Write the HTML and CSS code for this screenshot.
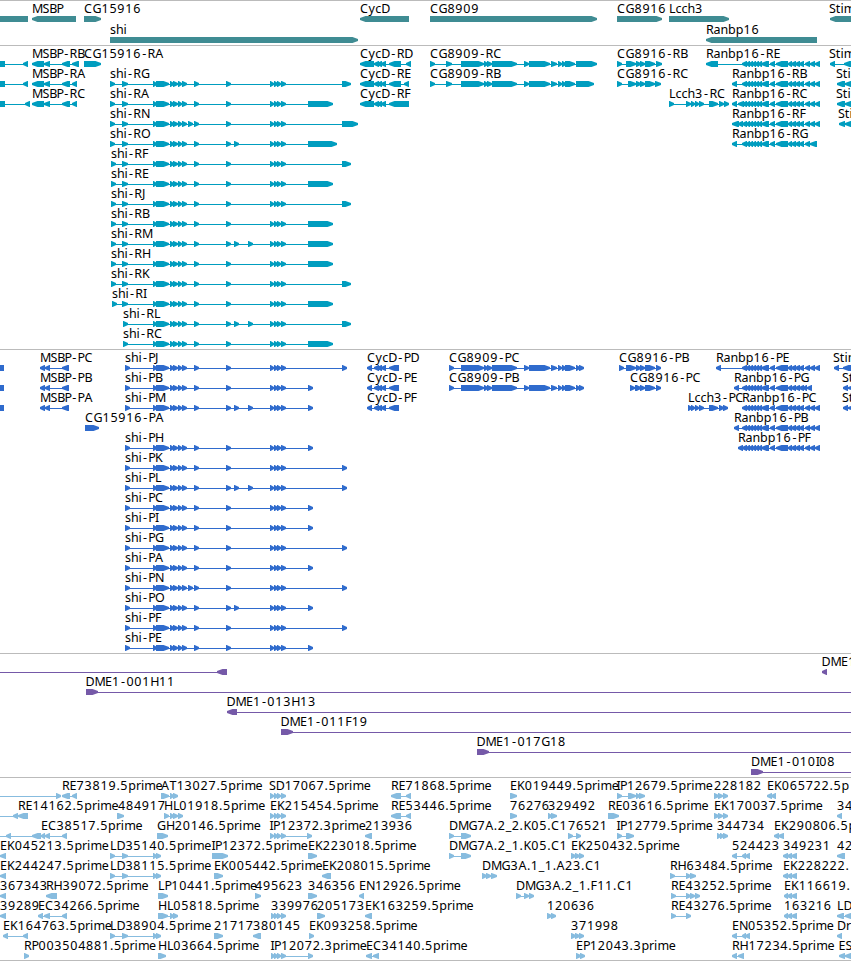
FILE: index.html
```html
<!DOCTYPE html>
<html lang="en">
<head>
<meta charset="utf-8">
<title>Genome browser</title>
<link rel="stylesheet" href="styles.css">
</head>
<body>
<main class="browser">
  <section class="track genes"><svg class="lane" id="genes" width="851" height="44"></svg></section>
  <section class="track transcripts"><svg class="lane" id="transcripts" width="851" height="303"></svg></section>
  <section class="track coding"><svg class="lane" id="coding" width="851" height="303"></svg></section>
  <section class="track clones"><svg class="lane" id="clones" width="851" height="123"></svg></section>
  <section class="track ests"><svg class="lane" id="ests" width="851" height="182"></svg></section>
</main>
<script src="tracks.js"></script>
</body>
</html>
```
FILE: styles.css
```css
body {
  margin: 0;
  background: #fff;
}

.browser {
  display: flex;
  flex-direction: column;
  width: 851px;
  height: 961px;
  overflow: hidden;
}

.track {
  border-top: 1px solid #bbb;
}

.ests {
  border-bottom: 1px solid #bbb;
}

.lane {
  display: block;
  overflow: hidden;
  font-family: "Noto Sans", "Open Sans", sans-serif;
  font-size: 12.5px;
}

.lane text {
  fill: #000;
}

.genes path { fill: #3f8c93; }
.transcripts path { fill: #009dbf; }
.coding path { fill: #2f6bcd; }
.clones path { fill: #7559a8; }
.ests path { fill: #87bcdf; }
```
FILE: tracks.js
```js
// Advance width of each character in a label, in pixels.
const ADVANCE = {
  A: 8.5, B: 7.1, C: 8.5, D: 9, E: 7, F: 6.6, G: 8.9, H: 8.9, I: 3.6, J: 3.8,
  K: 7.8, L: 6.4, M: 10.5, N: 8.9, O: 9.1, P: 6.8, R: 7.6, S: 6.8, T: 7.2,
  a: 7, b: 7.7, c: 6.1, e: 7, h: 7.5, i: 3.4, m: 11.2, n: 7.5, p: 7.7, r: 5,
  s: 6, t: 4.6, y: 6.7, "-": 6.4, ".": 3.9, "_": 6
};
const DIGIT_ADVANCE = 7.95;

// Feature: [row, label, label x, strand, segments, optional line start, optional line end]
const genes = [
  [0, "", 0, "<", "-10-28"],
  [0, "MSBP", 32, "<", "32-76"],
  [0, "CG15916", 84, ">", "84-101"],
  [0, "CycD", 360, "<", "360-409"],
  [0, "CG8909", 430, ">", "430-597"],
  [0, "CG8916", 617, ">", "617-662"],
  [0, "Lcch3", 669, ">", "669-729"],
  [0, "Stim", 829, "<", "830-870"],
  [1, "shi", 110, ">", "110-358"],
  [1, "Ranbp16", 706, "<", "706-817"]
];

const RAN_MID = "742-747 746-750 749-753 752-756 755-759 758-762 761-769 770-775 776-788 788-792 791-796 795-800 799-804 ";
const RAN = RAN_MID + "805-810 810-815 815-820";
const CG89 = "461-484 484-488 487-492 492-517 524-529 529-550 551-557 558-562 562-566 ";
const CG16 = "636-641 640-645 645-655 ";
const CYC = "374-379 377-382 381-386 ";

const shi = (row, label, x, start, extra, end) =>
  [row, label, x, ">", `${start} 153-157 156-169 170-174 173-178 178-182 182-187 194-199 226-231 270-274 274-278 277-281 281-286 ${extra} ${end}`];

const A = "342-351", B = "308-333", X1 = "188-193", X2 = "234-239", X3 = "234-239 248-253";
const S0 = "110-115 122-128", S1 = "111-116 122-128", S2 = "112-117 122-128", S3 = "123-128";

const transcripts = [
  [0, "", 0, "<", "-9-5 23-28"],
  [1, "", 0, "<", "-9-5 23-28"],
  [2, "", 0, "<", "-9-5 25-30"],
  [0, "MSBP-RB", 32, "<", "32-44 44-50 62-70 72-79"],
  [1, "MSBP-RA", 32, "<", "32-44 44-50 62-70 72-77"],
  [2, "MSBP-RC", 32, "<", "32-44 44-50 62-70 72-77"],
  [0, "CG15916-RA", 84, ">", "84-101"],
  shi(1, "shi-RG", 110, S0, "", A),
  shi(2, "shi-RA", 110, S0, "", B),
  shi(3, "shi-RN", 110, S0, X1, "342-358"),
  shi(4, "shi-RO", 110, S0, X2, "308-337"),
  shi(5, "shi-RF", 111, S1, "", A),
  shi(6, "shi-RE", 111, S1, "", B),
  shi(7, "shi-RJ", 111, S1, "", A),
  shi(8, "shi-RB", 111, S1, "", B),
  shi(9, "shi-RM", 111, S1, X3, B),
  shi(10, "shi-RH", 111, S1, "", B),
  shi(11, "shi-RK", 111, S1, "", A),
  shi(12, "shi-RI", 112, S2, "", B),
  shi(13, "shi-RL", 123, S3, X3, A),
  shi(14, "shi-RC", 123, S3, "", B),
  [0, "CycD-RD", 360, "<", `360-374 ${CYC} 389-401 406-411`],
  [1, "CycD-RE", 360, "<", `360-374 ${CYC} 389-401 404-409`],
  [2, "CycD-RF", 360, "<", `360-374 ${CYC} 389-409`],
  [0, "CG8909-RC", 430, ">", `430-435 446-452 ${CG89} 565-575 576-597`],
  [1, "CG8909-RB", 430, ">", `430-435 446-452 ${CG89} 565-575 576-594`],
  [0, "CG8916-RB", 617, ">", `617-622 626-636 ${CG16} 656-662`],
  [1, "CG8916-RC", 617, ">", `617-622 628-636 ${CG16} 655-661`],
  [2, "Lcch3-RC", 669, ">", "669-674 686-691 691-695 695-699 699-704 709-718 719-724 724-729"],
  [0, "Ranbp16-RE", 706, "<", `706-718 ${RAN}`],
  [1, "Ranbp16-RB", 732, "<", `732-737 ${RAN}`],
  [2, "Ranbp16-RC", 732, "<", `732-737 738-744 ${RAN}`],
  [3, "Ranbp16-RF", 732, "<", `732-739 738-743 ${RAN}`],
  [4, "Ranbp16-RG", 732, "<", `732-737 ${RAN_MID} 805-810 810-817`],
  [0, "Stim", 829, "<", "830-835 844-870"],
  [1, "Sti", 836, "<", "837-845 845-870"],
  [2, "Sti", 836, "<", "837-845 845-870"],
  [3, "Sti", 838, "<", "839-845 845-870"]
];

const P = "125-130", LONG = "342-347", SHORT = "308-313";
const coding = [
  [0, "", 0, "<", "-9-4"],
  [1, "", 0, "<", "-9-4"],
  [2, "", 0, "<", "-9-4"],
  [0, "MSBP-PC", 40, "<", "40-45 45-50 62-69"],
  [1, "MSBP-PB", 40, "<", "40-45 45-50 62-69"],
  [2, "MSBP-PA", 40, "<", "40-45 45-50 62-69"],
  [3, "CG15916-PA", 85, ">", "85-99"],
  shi(0, "shi-PJ", 125, P, "", LONG),
  shi(1, "shi-PB", 125, P, "", SHORT),
  shi(2, "shi-PM", 125, P, X3, SHORT),
  shi(4, "shi-PH", 125, P, "", SHORT),
  shi(5, "shi-PK", 125, P, "", LONG),
  shi(6, "shi-PL", 125, P, X3, LONG),
  shi(7, "shi-PC", 125, P, "", SHORT),
  shi(8, "shi-PI", 125, P, "", SHORT),
  shi(9, "shi-PG", 125, P, "", LONG),
  shi(10, "shi-PA", 125, P, "", SHORT),
  shi(11, "shi-PN", 125, P, X1, LONG),
  shi(12, "shi-PO", 125, P, X2, SHORT),
  shi(13, "shi-PF", 125, P, "", LONG),
  shi(14, "shi-PE", 125, P, "", SHORT),
  [0, "CycD-PD", 367, "<", `367-372 ${CYC} 389-399`],
  [1, "CycD-PE", 367, "<", `367-372 ${CYC} 389-399`],
  [2, "CycD-PF", 367, "<", `367-372 ${CYC} 389-399`],
  [0, "CG8909-PC", 449, ">", `449-454 ${CG89} 565-575 576-580 579-584`],
  [1, "CG8909-PB", 449, ">", `449-454 ${CG89} 565-575 576-580 579-584`],
  [0, "CG8916-PB", 619, ">", `619-624 626-636 ${CG16} 656-661`],
  [1, "CG8916-PC", 630, ">", `630-635 635-640 ${CG16} 656-661`],
  [2, "Lcch3-PC", 688, ">", "688-692 691-695 695-699 699-704 709-718 719-724 723-728"],
  [0, "Ranbp16-PE", 716, "<", `716-721 ${RAN}`],
  [1, "Ranbp16-PG", 734, "<", `734-739 ${RAN_MID} 803-807 807-812`],
  [2, "Ranbp16-PC", 742, "<", RAN],
  [3, "Ranbp16-PB", 734, "<", `734-739 ${RAN}`],
  [4, "Ranbp16-PF", 738, "<", `738-743 ${RAN}`],
  [0, "Stim", 833, "<", "834-839 843-870"],
  [1, "St", 842, "<", "843-848 848-870"],
  [2, "St", 842, "<", "843-848 848-870"]
];

const clones = [
  [0, "", 0, "<", "217-227", 0],
  [0, "DME1", 821.5, "<", "822-827"],
  [1, "DME1-001H11", 85.5, ">", "86-98", 86, 851],
  [2, "DME1-013H13", 226.5, "<", "227-237", 227, 851],
  [3, "DME1-011F19", 280.5, ">", "281-293", 281, 851],
  [4, "DME1-017G18", 476.5, ">", "477-489", 477, 851],
  [5, "DME1-010I08", 751, ">", "751-763", 751, 851]
];

const Q = "274-278 277-281 281-286";
const LD = "110-115 122-128 153-157 156-161";
const ests = [
  [0, "", 0, ">", "56-61", 0],
  [0, "RE73819.5prime", 62, "<", "62-70 72-77"],
  [0, "AT13027.5prime", 161, ">", "161-169 170-174 173-178"],
  [0, "SD17067.5prime", 269, ">", `270-274 ${Q}`],
  [0, "RE71868.5prime", 391, "<", "391-401 406-411"],
  [0, "EK019449.5prime", 510, ">", "510-517"],
  [0, "IP12679.5prime", 616.5, ">", "617-622 628-636 636-640 639-645"],
  [0, "228182", 714, ">", "714-719 718-723 723-728"],
  [0, "EK065722.5p", 767, "<", "767-772 771-776"],
  [1, "", 0, "<", "13-18 18-28", 0],
  [1, "RE14162.5prime", 18, "<", ""],
  [1, "484917", 118, ">", "117-124"],
  [1, "HL01918.5prime", 164, ">", "164-169 170-174 173-178 178-183"],
  [1, "EK215454.5prime", 270, ">", `270-274 ${Q}`],
  [1, "RE53446.5prime", 391, "<", "391-401 406-411"],
  [1, "76276", 510, ">", "510-517"],
  [1, "329492", 548, ">", "548-552 551-557"],
  [1, "RE03616.5prime", 608, ">", "608-619"],
  [1, "EK170037.5prime", 714, ">", "714-719 718-723 723-728"],
  [1, "34", 837, "<", "837-842"],
  [2, "", 0, "<", "6-11 32-41", 0, 62],
  [2, "EC38517.5prime", 41, "<", "41-45 45-50 62-67"],
  [2, "GH20146.5prime", 157, ">", "157-168"],
  [2, "IP12372.3prime", 269.5, ">", `270-274 ${Q} 307-312`],
  [2, "213936", 365, "<", "365-372"],
  [2, "DMG7A.2_2.K05.C1", 449, ">", "449-454 461-471"],
  [2, "76521", 568, ">", "568-573 576-581"],
  [2, "IP12779.5prime", 616.5, ">", "617-622 626-634"],
  [2, "344734", 717, ">", "717-721 720-724 723-728"],
  [2, "EK290806.5p", 774, "<", "774-779 778-784"],
  [3, "EK045213.5prime", 0, "<", "0-6"],
  [3, "LD35140.5prime", 110, ">", LD],
  [3, "IP12372.5prime", 211.5, ">", "212-228"],
  [3, "EK223018.5prime", 308, ">", "308-317"],
  [3, "DMG7A.2_1.K05.C1", 449, ">", "449-454 461-471"],
  [3, "EK250432.5prime", 571, ">", "571-576 575-580 579-584"],
  [3, "524423", 732, "<", "732-737 742-746 745-750"],
  [3, "349231", 783, "<", "783-788 787-792 791-797"],
  [3, "42", 837, "<", "837-845"],
  [4, "EK244247.5prime", 0, "<", "0-6"],
  [4, "LD38115.5prime", 110, ">", LD],
  [4, "EK005442.5prime", 214, ">", "214-223"],
  [4, "EK208015.5prime", 322, "<", "322-331"],
  [4, "DMG3A.1_1.A23.C1", 482, ">", "482-487 486-491 491-497"],
  [4, "RH63484.5prime", 670, ">", "670-675 686-691 690-696"],
  [4, "EK228222.", 783, "<", "783-788 787-792 791-797"],
  [5, "367343", 0, "<", "0-6"],
  [5, "RH39072.5prime", 46, "<", "46-57"],
  [5, "LP10441.5prime", 158, ">", "158-168"],
  [5, "495623", 255, ">", "255-261"],
  [5, "346356", 308, ">", "308-317"],
  [5, "EN12926.5prime", 359, "<", "359-364"],
  [5, "DMG3A.2_1.F11.C1", 516, ">", "516-521 524-529 529-534"],
  [5, "RE43252.5prime", 671, ">", "671-676 686-691 690-695 695-700"],
  [5, "EK116619.", 784, "<", "784-788 787-792 791-797"],
  [6, "39289", 0, "<", "0-6"],
  [6, "EC34266.5prime", 38, "<", "38-43 44-50 62-67"],
  [6, "HL05818.5prime", 158, ">", "158-168 170-174 173-178"],
  [6, "339976", 271, ">", `271-275 ${Q}`],
  [6, "205173", 317, ">", "317-325"],
  [6, "EK163259.5prime", 365, "<", "365-372"],
  [6, "120636", 547, ">", "547-552 551-556"],
  [6, "RE43276.5prime", 671, ">", "671-676 686-691"],
  [6, "163216", 784, "<", "784-788 787-792 791-797"],
  [6, "LD", 837, "<", "837-844 845-870"],
  [7, "EK164763.5prime", 3, "<", "3-8 23-28"],
  [7, "LD38904.5prime", 110, ">", LD],
  [7, "21717", 214, ">", "214-223"],
  [7, "380145", 253, "<", "253-261"],
  [7, "EK093258.5prime", 309, ">", "309-314"],
  [7, "371998", 571, ">", "571-576 575-580 579-584"],
  [7, "EN05352.5prime", 732, "<", "732-737 742-746 745-750"],
  [7, "Dr", 837, "<", "837-842"],
  [8, "RP003504881.5prime", 24, ">", "24-29"],
  [8, "HL03664.5prime", 158, ">", "158-166"],
  [8, "IP12072.3prime", 270.5, ">", `271-275 ${Q} 308-313`],
  [8, "EC34140.5prime", 366, "<", "366-372 373-379"],
  [8, "EP12043.3prime", 576, ">", "576-581 580-585"],
  [8, "RH17234.5prime", 732, "<", "732-737 738-744"],
  [8, "ES", 838.5, "<", "839-845 845-870"]
];

const SVG = "http://www.w3.org/2000/svg";

// A block whose leading end tapers to a point.
function segment(a, b, top, strand) {
  const head = Math.min(5.5, b - a - 0.6);
  return strand === ">"
    ? `M${a} ${top}H${b - head}L${b} ${top + 2}V${top + 4}L${b - head} ${top + 6}H${a}Z`
    : `M${b} ${top}H${a + head}L${a} ${top + 2}V${top + 4}L${a + head} ${top + 6}H${b}Z`;
}

function drawTrack(id, features, baseline, pitch) {
  const svg = document.getElementById(id);
  for (const [row, label, x, strand, spans, from, to] of features) {
    const base = baseline + row * pitch;
    const top = base + 3;
    const parts = (spans.match(/-?\d+-\d+/g) || []).map(s => s.match(/^(-?\d+)-(\d+)$/).slice(1).map(Number));
    if (parts.length) {
      const start = from ?? Math.min(...parts.map(p => p[0]));
      const end = to ?? Math.max(...parts.map(p => p[1])) - 1;
      const path = document.createElementNS(SVG, "path");
      path.setAttribute("d", `M${start} ${top + 3}H${end}V${top + 4}H${start}Z`);
      svg.append(path);
      for (const [a, b] of parts) {
        const block = document.createElementNS(SVG, "path");
        block.setAttribute("d", segment(a, b, top, strand));
        svg.append(block);
      }
    }
    if (label) {
      const text = document.createElementNS(SVG, "text");
      let pen = x;
      const pens = [...label].map(ch => {
        const at = ch === "-" ? pen + 1 : pen;
        pen += ADVANCE[ch] ?? DIGIT_ADVANCE;
        return at.toFixed(1);
      });
      text.setAttribute("x", pens.join(" "));
      text.setAttribute("y", base);
      text.textContent = label;
      svg.append(text);
    }
  }
}

drawTrack("genes", genes, 12, 21);
drawTrack("transcripts", transcripts, 12, 20);
drawTrack("coding", coding, 12, 20);
drawTrack("clones", clones, 12, 20);
drawTrack("ests", ests, 12, 20);
```
